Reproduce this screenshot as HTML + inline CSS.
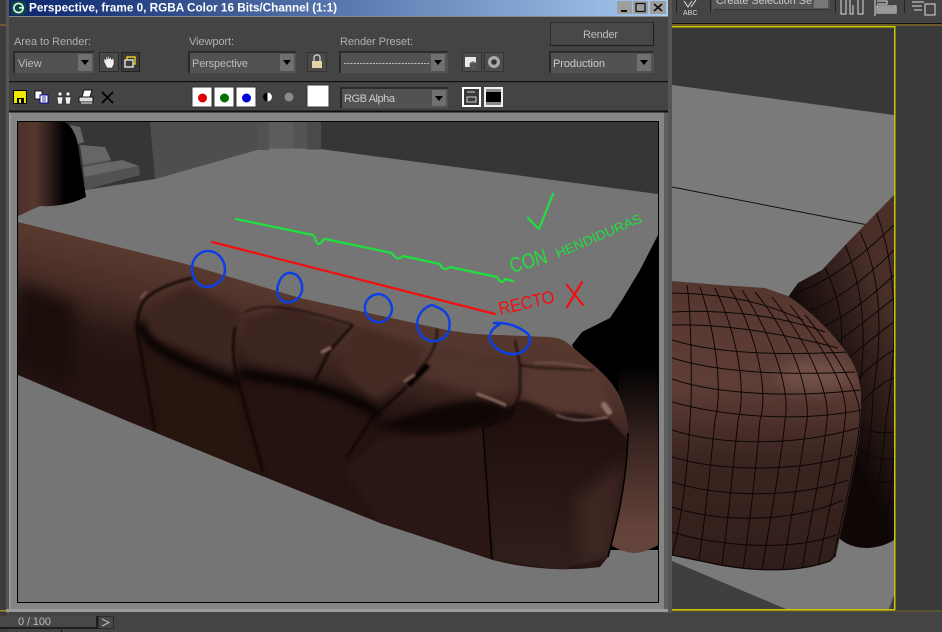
<!DOCTYPE html>
<html><head><meta charset="utf-8"><style>
html,body{margin:0;padding:0;background:#444;width:942px;height:632px;overflow:hidden}
svg{display:block;position:absolute;left:0;top:0}
text{font-family:"Liberation Sans",sans-serif;font-size:11px;fill:#b0b0b0}
</style></head><body>
<svg width="942" height="632" viewBox="0 0 942 632" xmlns="http://www.w3.org/2000/svg">
<defs>
<linearGradient id="tb" x1="0" x2="1" y1="0" y2="0"><stop offset="0" stop-color="#0a246a"/><stop offset="1" stop-color="#a6caf0"/></linearGradient>
<linearGradient id="arm" x1="18" x2="86" y1="0" y2="0" gradientUnits="userSpaceOnUse"><stop offset="0" stop-color="#4c3029"/><stop offset=".25" stop-color="#55372f"/><stop offset=".45" stop-color="#33201c"/><stop offset=".68" stop-color="#000"/><stop offset="1" stop-color="#000"/></linearGradient>
<linearGradient id="back" x1="0" x2="0" y1="365" y2="530" gradientUnits="userSpaceOnUse"><stop offset="0" stop-color="#000"/><stop offset=".5" stop-color="#3c2621"/><stop offset="1" stop-color="#64433b"/></linearGradient>
<linearGradient id="sof" x1="100" y1="247" x2="74" y2="354" gradientUnits="userSpaceOnUse"><stop offset="0" stop-color="#58392f"/><stop offset=".4" stop-color="#472c26"/><stop offset=".75" stop-color="#2a1814"/><stop offset="1" stop-color="#241311"/></linearGradient>
<linearGradient id="end" x1="0" x2="0" y1="420" y2="570" gradientUnits="userSpaceOnUse"><stop offset="0" stop-color="#1f100e"/><stop offset="1" stop-color="#30201c"/></linearGradient>
<linearGradient id="s1" x1="0" x2="0" y1="285" y2="570" gradientUnits="userSpaceOnUse"><stop offset="0" stop-color="#55362f"/><stop offset=".35" stop-color="#5e3d36"/><stop offset=".6" stop-color="#3c2521"/><stop offset="1" stop-color="#301d19"/></linearGradient>
<linearGradient id="s2" x1="805" x2="894" y1="350" y2="310" gradientUnits="userSpaceOnUse"><stop offset="0" stop-color="#0e0706"/><stop offset="1" stop-color="#4a2f29"/></linearGradient>
<filter id="b1" filterUnits="userSpaceOnUse" x="0" y="0" width="942" height="632" color-interpolation-filters="sRGB"><feGaussianBlur stdDeviation="1"/></filter>
<filter id="b3" filterUnits="userSpaceOnUse" x="0" y="0" width="942" height="632" color-interpolation-filters="sRGB"><feGaussianBlur stdDeviation="3.5"/></filter>
<filter id="b6" filterUnits="userSpaceOnUse" x="0" y="0" width="942" height="632" color-interpolation-filters="sRGB"><feGaussianBlur stdDeviation="8"/></filter>
<clipPath id="sofa"><path d="M18 222L190 265L300 298L437 328C460 333 480 335 500 335L550 337C560 338 566 341 570 345L597 368C610 380 618 390 622 403C628 418 629 430 628 445C625 480 618 520 608 557L600 567C570 571 530 570 493 560L380 523L247 470L120 418L18 375Z"/></clipPath>
<clipPath id="vp"><rect x="672" y="27" width="222" height="582"/></clipPath>
<clipPath id="c1"><path d="M672 281L720 285L765 288L788 296C810 310 835 335 850 358C858 372 861 385 861 400C862 440 850 490 836 555L830 561C800 572 760 572 720 565L672 555Z"/></clipPath>
<clipPath id="c2"><path d="M788 297L798 283L822 270L850 240L894 195V540C875 552 850 550 838 537C850 490 862 440 861 400C861 385 858 372 850 358C835 335 810 310 788 297Z"/></clipPath>
<clipPath id="img"><rect x="18" y="122" width="640" height="480"/></clipPath>
</defs>

<!-- app background -->
<rect width="942" height="632" fill="#444"/>
<rect x="672" y="23" width="270" height="1.5" fill="#111"/>
<rect x="672" y="24" width="270" height="2" fill="#6e5c28"/>
<rect x="895" y="26" width="47" height="584" fill="#3a3a3a"/>

<!-- top right toolbar -->
<g fill="none" stroke="#ddd" stroke-width="1">
<path d="M684 1L688 7L692 1M696 0L691 7"/>
<path d="M841 0V14H846V0M850 0V14H853V5M858 0V14H863V0"/>
<path d="M875 0V16M877 1H887V4H877M877 6H896V13H877Z"/>
<path d="M912 2H924M912 6H922M914 10H922M925 4H935V15H925Z"/>
</g>
<rect x="877" y="7" width="19" height="6" fill="#999"/>
<text x="683" y="15" style="font-size:7px;fill:#ddd">ABC</text>
<rect x="712" y="0" width="118" height="10" fill="#555"/>
<rect x="714" y="9" width="116" height="1" fill="#333"/>
<text x="716" y="4" textLength="96" lengthAdjust="spacingAndGlyphs" style="fill:#c8c8c8">Create Selection Se</text>
<rect x="814" y="0" width="14" height="8" fill="#777"/>
<rect x="835" y="0" width="1" height="13" fill="#222"/>
<rect x="904" y="0" width="1" height="13" fill="#222"/>
<rect x="676" y="0" width="1" height="13" fill="#222"/>
<rect x="710" y="0" width="1" height="13" fill="#222"/>

<!-- 3D viewport -->
<g clip-path="url(#vp)">
<rect x="672" y="27" width="222" height="582" fill="#383838"/>
<path d="M672 85L894 115V609H672Z" fill="#7a7a7a"/>
<path d="M672 561L786 609H672Z" fill="#3f3f3f"/>
<path d="M889 609L894 595V609Z" fill="#3f3f3f"/>
<path d="M672 187L868 225" stroke="#111" stroke-width="1" fill="none"/>
<path d="M788 297L798 283L822 270L850 240L894 195V540C875 552 850 550 838 537C850 490 862 440 861 400C861 385 858 372 850 358C835 335 810 310 788 297Z" fill="url(#s2)"/>
<g clip-path="url(#c2)" fill="none" stroke="#0c0605" stroke-width="1">
<path d="M793 293C825 285 860 258 894 225M803 313C830 305 865 280 894 250M815 330C842 320 870 298 894 275M828 348C848 335 872 316 894 298M840 365C858 350 876 335 894 322M851 385C866 370 880 358 894 350M858 408C870 392 882 382 894 378"/>
<path d="M861 428C870 432 885 434 894 432M860 450C870 458 885 461 894 458M855 475C868 482 885 483 894 481M848 498C865 505 882 506 894 503M842 525C860 531 880 529 894 520"/>
<path d="M825 268C838 295 845 320 840 362M845 245C860 280 868 325 860 385M860 232C878 270 885 320 873 395C872 440 862 500 855 548M876 212C895 260 900 330 886 420C882 470 874 510 868 552M894 260C900 340 900 440 882 552"/>
</g>
<path d="M672 281L720 285L765 288L788 296C810 310 835 335 850 358C858 372 861 385 861 400C862 440 850 490 836 555L830 561C800 572 760 572 720 565L672 555Z" fill="url(#s1)"/>
<ellipse cx="815" cy="375" rx="38" ry="16" fill="#7c5a52" opacity=".7" filter="url(#b6)" clip-path="url(#c1)"/>
<path d="M672 555L720 565C760 572 800 572 830 561L836 555" stroke="#0c0605" stroke-width="1.2" fill="none"/>
<g clip-path="url(#c1)" fill="none" stroke="#0c0605" stroke-width="1">
<path d="M672 293C710 294 750 296 803 320M672 312C710 310 770 312 825 332M672 325C715 324 770 330 838 348M672 340C710 352 770 356 848 352M672 358C710 370 770 376 855 372M672 379C715 394 790 398 860 390M672 402C715 414 790 424 862 410M672 430C715 444 790 448 858 428M672 457C715 470 790 474 853 455M672 482C715 496 790 500 848 480M672 507C715 522 790 524 843 500M672 532C715 546 790 552 836 535"/>
<path d="M687 285C692 320 692 400 690 420C688 470 680 530 672 555M700 287C718 340 722 395 715 420C710 470 705 520 699 560M715 288C740 340 746 395 738 420C733 470 728 520 722 565M730 288C760 340 768 395 760 420C756 470 750 520 743 570M742 290C778 345 790 395 785 420C780 470 770 520 762 570M755 292C795 340 810 395 807 420C800 470 790 520 783 570M772 297C810 345 830 395 827 420C822 470 810 520 802 570M790 305C825 350 850 390 845 420C840 470 826 520 818 568M805 315C838 355 862 395 860 420C855 470 842 515 833 560"/>
</g>
</g>
<rect x="672" y="26" width="223" height="1.5" fill="#c8c800"/>
<rect x="894" y="26" width="1.5" height="584" fill="#c8c800"/>
<rect x="672" y="609" width="223" height="1.5" fill="#c8c800"/>
<rect x="672" y="610.500" width="270" height="1" fill="#6e5c28"/>

<!-- left strip -->
<rect x="0" y="0" width="7" height="632" fill="#3c3c3c"/>
<rect x="0" y="610" width="6" height="1.5" fill="#a08a30"/>
<rect x="0" y="24" width="7" height="2" fill="#6e5c28"/>

<!-- window -->
<rect x="6" y="0" width="666" height="613" fill="#444"/>
<rect x="6" y="0" width="3" height="613" fill="#555"/>
<rect x="668" y="0" width="4" height="613" fill="#555"/>
<rect x="9" y="0" width="659" height="16" fill="url(#tb)"/>
<rect x="9" y="16" width="659" height="1" fill="#8a8a8a"/>
<rect x="11" y="1" width="15" height="14" rx="2" fill="#14403f"/>
<circle cx="18.5" cy="8" r="4.6" fill="none" stroke="#cfe" stroke-width="1.6"/>
<rect x="19" y="7" width="5" height="1.6" fill="#cfe"/>
<text x="29" y="11.5" textLength="308" lengthAdjust="spacingAndGlyphs" style="font-weight:bold;font-size:12px;fill:#fff">Perspective, frame 0, RGBA Color 16 Bits/Channel (1:1)</text>
<!-- window buttons -->
<g>
<rect x="617" y="1" width="15" height="13" fill="#9e9e9e"/><rect x="621" y="10" width="6" height="2" fill="#111"/>
<rect x="633" y="1" width="15" height="13" fill="#9e9e9e"/><rect x="636" y="3.5" width="9" height="8" fill="none" stroke="#111" stroke-width="1.3"/>
<rect x="650" y="1" width="16" height="13" fill="#9e9e9e"/><path d="M654 4L662 11M662 4L654 11" stroke="#111" stroke-width="1.7"/>
</g>

<!-- controls row 1 -->
<text x="14" y="45" textLength="77">Area to Render:</text>
<text x="189" y="45" textLength="45">Viewport:</text>
<text x="340" y="45" textLength="73">Render Preset:</text>
<g>
<rect x="14" y="52" width="80" height="21" fill="#525252"/><path d="M14 73V52H94" fill="none" stroke="#222" stroke-width="1.6"/>
<rect x="78" y="54" width="14" height="17" fill="#707070"/><path d="M81 60H89L85 65Z" fill="#000"/>
<text x="18" y="67" style="fill:#bbb">View</text>

<rect x="189" y="52" width="107" height="21" fill="#525252"/><path d="M189 73V52H296" fill="none" stroke="#222" stroke-width="1.6"/>
<rect x="280" y="54" width="14" height="17" fill="#707070"/><path d="M283 60H291L287 65Z" fill="#000"/>
<text x="192" y="67" textLength="56" style="fill:#bbb">Perspective</text>

<rect x="340" y="52" width="108" height="21" fill="#525252"/><path d="M340 73V52H448" fill="none" stroke="#222" stroke-width="1.6"/>
<rect x="431" y="54" width="14" height="17" fill="#707070"/><path d="M434 60H442L438 65Z" fill="#000"/>
<path d="M344 63.5H429" stroke="#bbb" stroke-dasharray="2.2 1" fill="none"/>

<rect x="550" y="52" width="104" height="21" fill="#525252"/><path d="M550 73V52H654" fill="none" stroke="#222" stroke-width="1.6"/>
<rect x="637" y="54" width="14" height="17" fill="#707070"/><path d="M640 60H648L644 65Z" fill="#000"/>
<text x="553" y="67" textLength="52" style="fill:#ccc">Production</text>

<!-- render button -->
<rect x="550.5" y="22.5" width="103" height="23" fill="#484848" stroke="#2c2c2c"/>
<path d="M550.5 45.5H653.5V22.5" fill="none" stroke="#222" stroke-width="1.2"/>
<text x="583" y="38" textLength="35" style="fill:#bbb">Render</text>

<!-- small buttons -->
<rect x="99.5" y="52.5" width="19" height="19" fill="#4a4a4a" stroke="#2a2a2a"/>
<path d="M104 62V58L106 60V55L108 59V54L110 59V55L112 60V57L114 60V64L112 68H107Z" fill="#eee" stroke="#222" stroke-width=".5"/>
<rect x="121.5" y="52.5" width="18" height="19" fill="#3a3a3a" stroke="#222"/>
<rect x="125" y="60" width="8" height="7" fill="none" stroke="#fff" stroke-width="1.2"/>
<path d="M127 60V57H135V64H133" fill="none" stroke="#e8d020" stroke-width="1.4"/>
<rect x="307.5" y="52.5" width="19" height="19" fill="#4a4a4a" stroke="#333"/>
<rect x="312" y="61" width="10" height="7" fill="#e8d0a8"/><path d="M314 61V57.5C314 54 320 54 320 57.5V61" fill="none" stroke="#ccc" stroke-width="1.4"/>
<rect x="462.5" y="52.5" width="19" height="19" fill="#4c4c4c" stroke="#333"/>
<rect x="465" y="57" width="11" height="10" fill="#e8e8e8"/><circle cx="473" cy="65" r="3.6" fill="#777"/><rect x="470" y="63" width="7" height="5" fill="#555"/>
<rect x="484.5" y="52.5" width="19" height="19" fill="#4c4c4c" stroke="#333"/>
<circle cx="494" cy="62" r="6" fill="#aaa"/><circle cx="494" cy="62" r="2.8" fill="#333"/>
</g>
<rect x="9" y="81" width="659" height="1.2" fill="#111"/>

<!-- controls row 2 -->
<g>
<rect x="13.5" y="90.5" width="13" height="13" fill="#f0e800" stroke="#000"/>
<rect x="17" y="98" width="7" height="6" fill="#000"/><rect x="19" y="99" width="2" height="4" fill="#f0e800"/>
<rect x="35" y="91" width="7" height="8" fill="#fff" stroke="#000" stroke-width=".8"/><rect x="40" y="95" width="8" height="8" fill="#fff" stroke="#00a" stroke-width="1"/>
<path d="M42 97H46M42 99H46M42 101H46" stroke="#008" stroke-width=".7"/>
<g fill="#eee" stroke="#222" stroke-width=".6"><circle cx="60" cy="94" r="2"/><path d="M57 97H63L62 104H58Z"/><circle cx="68" cy="94" r="2"/><path d="M65 97H71L70 104H66Z"/></g>
<path d="M79 97H93V102H79Z" fill="#ddd" stroke="#111"/><path d="M82 97L84 90H92L90 97Z" fill="#fff" stroke="#111"/><rect x="81" y="102" width="11" height="2" fill="#999"/>
<path d="M102 92L113 103M113 92L102 103" stroke="#000" stroke-width="1.7"/>

<rect x="192" y="87" width="20" height="20" fill="#fff" stroke="#333"/><circle cx="202.500" cy="98" r="4.500" fill="#e00000"/>
<rect x="214" y="87" width="20" height="20" fill="#fff" stroke="#333"/><circle cx="224.500" cy="98" r="4.500" fill="#007000"/>
<rect x="236" y="87" width="20" height="20" fill="#fff" stroke="#333"/><circle cx="246.500" cy="98" r="4.500" fill="#0000d8"/>
<circle cx="267.500" cy="97" r="4.500" fill="#000"/><path d="M267.500 92.500A4.500 4.500 0 0 1 267.500 101.500Z" fill="#fff"/>
<circle cx="289" cy="97" r="4.500" fill="#8a8a8a"/>
<rect x="307" y="85" width="22" height="22" fill="#fff" stroke="#333"/>

<rect x="341" y="88" width="107" height="20" fill="#525252"/><path d="M341 108V88H448" fill="none" stroke="#222" stroke-width="1.6"/>
<rect x="432" y="90" width="14" height="16" fill="#707070"/><path d="M435 96H443L439 101Z" fill="#000"/>
<text x="344" y="102" textLength="51" style="fill:#ccc">RGB Alpha</text>

<rect x="462" y="87" width="19" height="20" fill="#fff"/><rect x="464" y="89" width="15" height="16" fill="#3a3a3a"/>
<path d="M467 92H475M467 97H476V102H467Z" fill="none" stroke="#ccc" stroke-width="1"/>
<rect x="484" y="87" width="19" height="20" fill="#eee"/><rect x="486" y="89" width="15" height="16" fill="#888"/><rect x="486" y="92" width="15" height="10" fill="#000"/>
</g>
<rect x="9" y="110.500" width="659" height="2" fill="#111"/>

<!-- render frame -->
<rect x="9" y="112.500" width="657" height="499.500" fill="#858585"/>
<rect x="9" y="112.500" width="1.500" height="499.500" fill="#9a9a9a"/>
<rect x="664" y="112.500" width="4" height="500" fill="#5f5f5f"/>
<rect x="6" y="609" width="662" height="3" fill="#9a9a9a"/>
<rect x="17.500" y="121.500" width="641" height="481" fill="#757575" stroke="#000" stroke-width="1"/>

<!-- render scene -->
<g clip-path="url(#img)">
<rect x="18" y="122" width="640" height="480" fill="#757575"/>
<path d="M18 122H658V194L320 149L280 148L260 149L155 179L85 190L18 200Z" fill="#363636"/>
<path d="M150 122H257V150L155 179Z" fill="#4e4e4e"/>
<rect x="257" y="122" width="12" height="28" fill="#525252"/>
<rect x="269" y="122" width="24" height="26.500" fill="#5c5c5c"/>
<rect x="293" y="122" width="14" height="26.500" fill="#545454"/>
<rect x="307" y="122" width="14" height="27.500" fill="#4a4a4a"/>
<!-- stairs -->
<path d="M70 125L80 127L84 142L78 144Z" fill="#666"/>
<path d="M80 145L105 147L111 160L83 165Z" fill="#666"/>
<path d="M83 165L111 160L112 167L84 170Z" fill="#505050"/>
<path d="M83 167L122 160L139 166L84 177Z" fill="#686868"/>
<path d="M84 177L139 166L140 175L85 190Z" fill="#525252"/>
<!-- far arm -->
<path d="M18 122H65C74 128 78 138 80 160L86 197C72 204 55 207 40 206L18 216Z" fill="url(#arm)"/>
<!-- right rear shapes -->
<path d="M572 345L582 332L610 318L622 300L640 270L658 235V550H600V400Z" fill="#000"/>
<path d="M620 365H658V545C648 551 640 553 633 553C625 552 616 549 608 543Z" fill="url(#back)"/>
<!-- main couch -->
<path d="M18 222L190 265L300 298L437 328C460 333 480 335 500 335L550 337C560 338 566 341 570 345L597 368C610 380 618 390 622 403C628 418 629 430 628 445C625 480 618 520 608 557L600 567C570 571 530 570 493 560L380 523L247 470L120 418L18 375Z" fill="url(#sof)"/>
<g clip-path="url(#sofa)">
<!-- dark band at far left -->
<path d="M18 282L75 305L70 385L18 365Z" fill="#1a0e0b" filter="url(#b6)"/>
<!-- lower dark faces -->
<path d="M145 345L237 385L262 475L155 440Z" fill="#27150f" filter="url(#b3)"/>
<path d="M240 380L310 385L378 418L345 470L320 510L262 470Z" fill="#241310" filter="url(#b3)"/>
<path d="M345 470L380 440L450 428L484 430L492 560L380 523Z" fill="#2b1814" filter="url(#b3)"/>
<path d="M484 425L520 400L610 420L628 440L608 557L560 570L493 560Z" fill="url(#end)" filter="url(#b1)"/>
<path d="M575 500L626 460L612 550L585 568Z" fill="#4a2e28" opacity=".65" filter="url(#b6)"/>
<!-- cushion faces -->
<path d="M148 305L190 285L240 312L235 370L150 335Z" fill="#3e2620" filter="url(#b3)"/>
<path d="M243 320L285 307L350 327L328 350L313 375L245 360Z" fill="#3c2420" filter="url(#b3)"/>
<path d="M355 322L430 338L412 375L375 400L340 370Z" fill="#462b25" filter="url(#b3)"/>
<path d="M425 335L515 345L520 385L490 395L420 378Z" fill="#4f332d" filter="url(#b3)"/>
<path d="M525 368L595 372L612 412L555 413L522 395Z" fill="#573932" filter="url(#b3)"/>
<path d="M290 305L437 330L520 340L570 348L590 368L520 358L420 345L350 322Z" fill="#54372f" filter="url(#b3)"/>
<!-- dark bands -->
<path d="M140 322C142 340 160 350 185 362C205 372 225 378 237 385" fill="none" stroke="#080302" stroke-width="9" filter="url(#b3)"/>
<path d="M240 373C270 378 290 382 307 385C335 392 360 402 380 415" fill="none" stroke="#080302" stroke-width="10" filter="url(#b3)"/>
<path d="M370 425C400 420 430 405 470 400C490 398 505 405 513 410C500 422 480 430 450 433C420 435 395 433 370 425Z" fill="#0f0705" filter="url(#b3)"/>
<path d="M408 385L428 365" stroke="#060202" stroke-width="6" filter="url(#b1)"/>
<!-- creases -->
<g fill="none" stroke="#0c0504" filter="url(#b1)">
<path d="M192 278C170 283 150 292 143 302C136 315 136 332 140 347L155 430" stroke-width="2.200"/>
<path d="M235 327C232 345 233 362 237 377L263 472" stroke-width="2.200"/>
<path d="M245 312C262 303 290 305 353 325" stroke-width="1.200"/>
<path d="M353 325L330 350L315 380" stroke-width="2.200"/>
<path d="M407 387L373 417L360 437L347 457" stroke-width="2.200"/>
<path d="M437 328C438 340 433 355 420 368" stroke-width="1.400"/>
<path d="M515 340L520 365L520 393L510 417L484 427" stroke-width="1.600"/>
<path d="M520 365C545 370 570 368 593 370" stroke-width="1.200"/>
</g>
<path d="M483 427L492 560" stroke="#000" stroke-width="1.400" fill="none"/>
<!-- highlights -->
<g fill="none" stroke-linecap="round" filter="url(#b1)">
<path d="M141 298L146 292" stroke="#7a5a52" stroke-width="2.500"/>
<path d="M322 352L330 348" stroke="#8e6e64" stroke-width="3"/>
<path d="M405 381L414 375" stroke="#806056" stroke-width="3"/>
<path d="M478 394C488 398 495 400 505 405" stroke="#8c6c62" stroke-width="3"/>
<path d="M557 415C570 421 585 422 607 417" stroke="#9a7a70" stroke-width="1.500"/>
<path d="M604 405L609 412" stroke="#8f7268" stroke-width="6"/>
<path d="M535 363C550 362 565 363 590 368" stroke="#7a5a50" stroke-width="1.500"/>
</g>
</g>
<path d="M628 433C627 480 618 520 608 557" fill="none" stroke="#000" stroke-width="1.500"/>

<!-- annotations -->
<g fill="none" stroke-linecap="round" stroke-linejoin="round">
<path d="M236 219L313 235C316 238 315 243 319 244C322 244 322 239 325 239L392 253C394 257 398 261 403 256L440 264C442 270 447 270 450 267L497 277C500 283 503 283 505 279L513 281" stroke="#20e040" stroke-width="2.200"/>
<path d="M528 218L539 229L553 194" stroke="#20e040" stroke-width="2.200"/>
<path d="M212 242L495 314" stroke="#f01010" stroke-width="2.200"/>
<path d="M582 282L567 307M567 285L583 305" stroke="#f01010" stroke-width="2.200"/>
<g stroke="#0c40e4" stroke-width="2.500">
<path d="M208 251C218 251 225 260 225 270C225 280 215 287 206 287C197 286 192 277 192 268C192 258 200 251 208 251Z"/>
<path d="M291 273C299 274 303 282 302 291C300 299 293 303 285 302C278 300 276 292 278 285C280 279 284 272 291 273Z"/>
<path d="M379 294C387 295 392 302 392 310C391 318 384 323 376 322C369 320 364 313 365 306C366 299 372 294 379 294Z"/>
<path d="M432 305L439 308C448 312 451 320 449 330C447 338 438 342 430 341C422 339 417 331 417 323C418 314 424 307 432 305Z"/>
<path d="M494 323C505 322 520 326 529 335C532 343 526 352 516 354C505 355 494 349 490 340C489 332 493 328 500 324"/>
</g>
</g>
<g transform="translate(512 273) rotate(-16)"><text x="0" y="0" textLength="38" lengthAdjust="spacingAndGlyphs" style="font-size:21px;fill:#20e040">CON</text></g>
<g transform="translate(558 258) rotate(-23)"><text x="0" y="0" textLength="92" lengthAdjust="spacingAndGlyphs" style="font-size:13px;fill:#20e040">HENDIDURAS</text></g>
<g transform="translate(500 315) rotate(-13)"><text x="0" y="0" textLength="57" lengthAdjust="spacingAndGlyphs" style="font-size:18px;fill:#f01010">RECTO</text></g>
</g>

<!-- progress -->
<rect x="0" y="616" width="97" height="12" fill="#484848"/>
<path d="M0 628H97V616" fill="none" stroke="#111" stroke-width="1.500"/>
<text x="18" y="625" textLength="33" style="fill:#bbb">0 / 100</text>
<rect x="98.500" y="616.500" width="15" height="12" fill="#484848" stroke="#2c2c2c"/>
<path d="M102 619L109 622.500L102 626" fill="none" stroke="#bbb" stroke-width="1"/>
<rect x="61" y="630" width="1" height="2" fill="#111"/>
</svg>
</body></html>
